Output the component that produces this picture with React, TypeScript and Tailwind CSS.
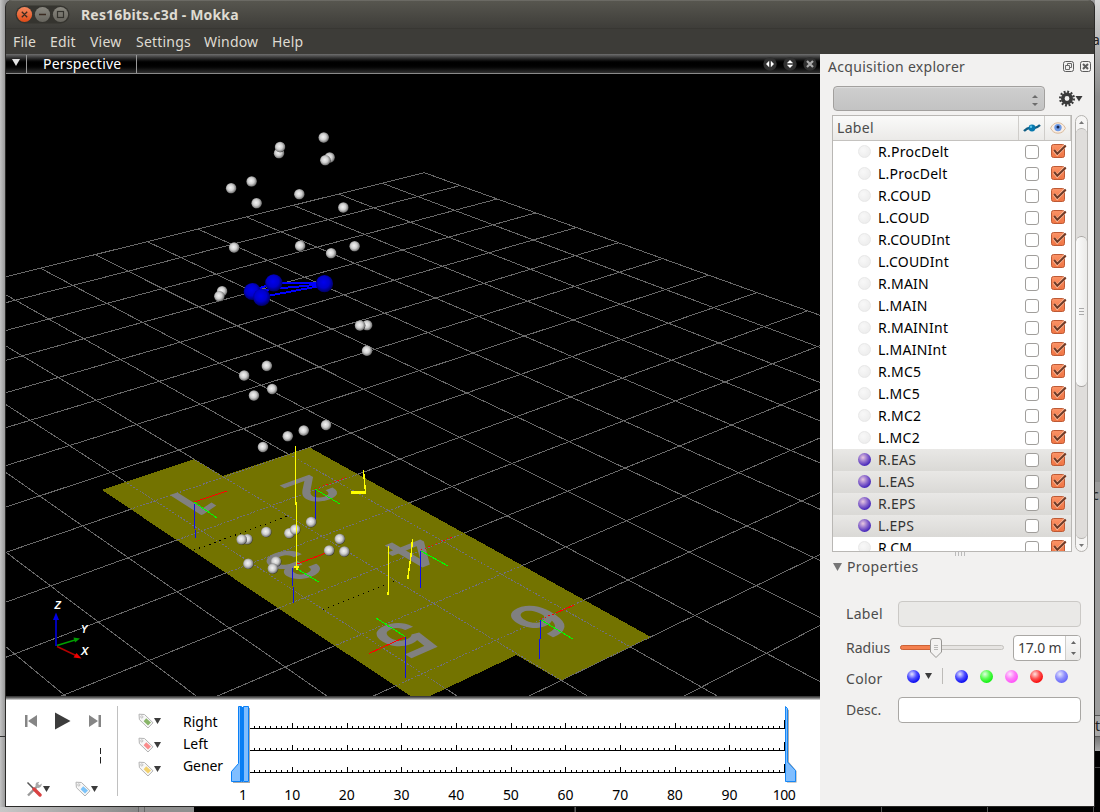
import React from "react";

type Pt = [number, number];

/* Ground plane projection */
const G = { x0: 424.3, y0: 172.7, a: -48.68, b: 7.35, c: 26.54, d: 9.17, g: -0.01711, h: -0.01988 };
const project = (u: number, v: number): Pt => {
  const w = 1 + G.g * u + G.h * v;
  return [(G.x0 + G.a * u + G.c * v) / w, (G.y0 + G.b * u + G.d * v) / w];
};
const groundMatrix = (x: number, y: number, k: number) => {
  const A = G.a - G.g * x;
  const B = G.c - G.h * x;
  const C = G.b - G.g * y;
  const D = G.d - G.h * y;
  const det = A * D - B * C;
  const u = ((x - G.x0) * D - B * (y - G.y0)) / det;
  const v = (A * (y - G.y0) - C * (x - G.x0)) / det;
  const w = (1 + G.g * u + G.h * v) / k;
  return `matrix(${A / w} ${C / w} ${-B / w} ${-D / w} ${x} ${y})`;
};

const steps = Array.from({ length: 21 }, (_, i) => i);
const gridPath = steps
  .flatMap((i) => [
    [project(i, 0), project(i, 20)],
    [project(0, i), project(20, i)],
  ])
  .map(([p, q]) => `M${p[0].toFixed(1)} ${p[1].toFixed(1)}L${q[0].toFixed(1)} ${q[1].toFixed(1)}`)
  .join("");

const plates = "102,490 194,459 223,476 309,447 651,637 560.5,680.5 516.5,655 428,697 412,697 281,610";

const markers: Pt[] = [
  [278.7, 153], [279.7, 146.7], [323.4, 137.3], [329.3, 157.3], [325, 160], [230.8, 188], [251.3, 181.2], [256.3, 203],
  [299, 194], [343, 207.3], [233.8, 247.3], [299.8, 245.6], [354.3, 246], [330.8, 253], [221.7, 291], [219, 296],
  [366.8, 325], [359.7, 325.3], [366.7, 350.5], [266.5, 365.6], [243.8, 375.3], [271.8, 388.8], [253.6, 395.3],
  [325.7, 424.8], [303.4, 430.3], [287.4, 436], [262.6, 446.8], [310.8, 521.8], [289, 533], [294.8, 529.3],
  [265.9, 531.7], [247, 539], [241.3, 539.2], [248, 563.5], [275.7, 561.3], [272.5, 568.3], [328.8, 550.2],
  [339.4, 538.8], [344, 551.3],
];
const pelvis: Pt[] = [[252.3, 291.5], [273.8, 282.8], [324.5, 283.7], [261.7, 297.3]];

const digits: [string, number, number][] = [
  ["1", 191, 503], ["2", 311.5, 489.5], ["3", 292.5, 565], ["4", 414, 552], ["5", 406.5, 638.5], ["6", 540, 620.5],
];

function Scene() {
  return (
    <svg className="block h-[622px] w-[814px] bg-black" viewBox="6 74 814 622">
      <defs>
        <radialGradient id="ball" cx="44%" cy="44%" r="58%">
          <stop offset="0" stopColor="#f4f4f4" />
          <stop offset="0.5" stopColor="#cfcfcf" />
          <stop offset="0.85" stopColor="#808080" />
          <stop offset="1" stopColor="#2c2c2c" />
        </radialGradient>
        <radialGradient id="blueBall" cx="45%" cy="42%" r="60%">
          <stop offset="0" stopColor="#0000ee" />
          <stop offset="0.55" stopColor="#0000cc" />
          <stop offset="1" stopColor="#000058" />
        </radialGradient>
        <clipPath id="plateClip">
          <polygon points={plates} />
        </clipPath>
      </defs>
      <g shapeRendering="crispEdges" fill="none">
        <path d={gridPath} stroke="#686868" strokeWidth="1" />
        <polygon points={plates} fill="#737300" />
        <path d={gridPath} stroke="#70707c" strokeDasharray="2 1.5" clipPath="url(#plateClip)" />
        <path d="M194 550L288 516M323 610L394 581" stroke="#000" strokeDasharray="1.2 4.2" />
      </g>
      {digits.map(([t, x, y]) => (
        <text
          key={t}
          transform={groundMatrix(x, y, 0.0091)}
          y="35"
          textAnchor="middle"
          fontSize="100"
          fill="#808080"
          stroke="#808080"
          strokeWidth="3"
          fontFamily="Roboto, sans-serif"
        >
          {t}
        </text>
      ))}
      <g shapeRendering="crispEdges" fill="none" strokeWidth="1">
        <path stroke="#0f0fe8" d="M194 504L194.5 520L195.5 538M315.5 490V524M292.5 568L293.5 603M420.5 551V588M405.5 637V678M540.5 620L539.5 659" />
        <path stroke="#00ff00" d="M194 502L217 518M315 489L340 504M297 569L319 582M421 551L448 566M405 636.5L376 618M541 620L573 639" />
        <path stroke="#ff0000" d="M194 502L227 491M297 564L326 553M405 637L369 653.5M556 613L574 605" />
        <path stroke="#ff0000" strokeDasharray="1.5 2.5" d="M315 489L349 476.5M421 550L452 537M541 619L556 613" />
      </g>
      {markers.map(([x, y], i) => (
        <circle key={i} cx={x + 0.4} cy={y + 0.3} r="5.3" fill="url(#ball)" />
      ))}
      <g shapeRendering="crispEdges" fill="none" stroke="#ffff00">
        <path d="M295.5 446V505" />
        <path d="M296.5 502V567M388.5 546V594M412.5 539L411 556L408 577M363.5 470L364.5 482L365.5 492M294 567H299M296 569H298" strokeWidth="1.4" />
        <path d="M351 492.3H366M387 593.5H389M407 577.5H409" strokeWidth="2.4" />
      </g>
      <path d="M252 291L274 283L325 282.5M252 291L325 284M262 297L325 285M262 297L274 283M252 291L262 297" stroke="#0000ff" strokeWidth="2" fill="none" shapeRendering="crispEdges" />
      {pelvis.map(([x, y], i) => (
        <circle key={i} cx={x} cy={y} r="8.6" fill="url(#blueBall)" />
      ))}
      <path d="M56 646V617" stroke="#0000b4" strokeWidth="2" />
      <path d="M56 612.5L59 620H53Z" fill="#0000e6" />
      <path d="M57 645.5L75 640" stroke="#00a000" strokeWidth="1.4" />
      <path d="M80 638.5L73.5 637.5L75 642.5Z" fill="#009c00" />
      <path d="M57 646.5L76 655.5" stroke="#b40000" strokeWidth="1.4" />
      <path d="M81.5 658.5L73.5 657.5L76.5 653Z" fill="#f00000" />
      <g fill="#fff" fontFamily="Liberation Sans, sans-serif" fontStyle="italic" fontWeight="bold" fontSize="11">
        <text x="54.5" y="609" textLength="6.5" lengthAdjust="spacingAndGlyphs">Z</text>
        <text x="81" y="633" textLength="6.5" lengthAdjust="spacingAndGlyphs">Y</text>
        <text x="81" y="655" textLength="7.5" lengthAdjust="spacingAndGlyphs">X</text>
      </g>
    </svg>
  );
}

function TitleButtons() {
  return (
    <svg className="ml-[9px] h-5 w-[56px]" viewBox="15 5 56 20">
      <defs>
        <linearGradient id="closeFill" x2="0" y2="1">
          <stop offset="0" stopColor="#f58a60" />
          <stop offset="1" stopColor="#df4a16" />
        </linearGradient>
        <linearGradient id="btnFill" x2="0" y2="1">
          <stop offset="0" stopColor="#8a8880" />
          <stop offset="1" stopColor="#66645d" />
        </linearGradient>
      </defs>
      <rect x="15.5" y="5.5" width="54" height="18" rx="9" fill="#35342f" />
      <circle cx="24.5" cy="14.5" r="7.6" fill="url(#closeFill)" />
      <circle cx="42.5" cy="14.5" r="7.6" fill="url(#btnFill)" />
      <circle cx="60.5" cy="14.5" r="7.6" fill="url(#btnFill)" />
      <path d="M21.8 11.8L27.2 17.2M27.2 11.8L21.8 17.2M39 14.5H46" stroke="#3a2a20" strokeWidth="1.3" />
      <rect x="57.5" y="11.5" width="6" height="6" fill="none" stroke="#34332e" strokeWidth="1.2" />
    </svg>
  );
}

const ball = "size-[13px] rounded-full";
const names = [
  "R.ProcDelt", "L.ProcDelt", "R.COUD", "L.COUD", "R.COUDInt", "L.COUDInt", "R.MAIN", "L.MAIN", "R.MAINInt", "L.MAINInt",
  "R.MC5", "L.MC5", "R.MC2", "L.MC2", "R.EAS", "L.EAS", "R.EPS", "L.EPS", "R.CM",
];

function Checked() {
  return (
    <svg className="h-[17px] w-[17px]" viewBox="0 0 17 17">
      <defs>
        <linearGradient id="chk" x2="0" y2="1">
          <stop offset="0" stopColor="#fb9367" />
          <stop offset="1" stopColor="#ef7443" />
        </linearGradient>
      </defs>
      <rect x="1.5" y="1.5" width="13" height="13" rx="2" fill="url(#chk)" stroke="#bd5a35" />
      <path d="M4.2 7.4L7.3 11L15 2.8" fill="none" stroke="#ffc0a0" strokeWidth="3.2" />
      <path d="M4.2 7L7.3 10.8L15.8 2.5" fill="none" stroke="#6e3b28" strokeWidth="2" />
    </svg>
  );
}

function Row({ name }: { name: string }) {
  const on = /\.E[AP]S$/.test(name);
  return (
    <div className={"flex h-[22px] shrink-0 items-center " + (on ? "bg-linear-to-b from-[#e9e8e6] to-[#dad9d6] text-[#333]" : "text-black")}>
      <div
        className={
          "mb-[1px] ml-[25px] size-[13px] shrink-0 rounded-full " +
          (on
            ? "bg-[radial-gradient(circle_at_38%_35%,#e8c8e0,#8a68cc_40%,#3f20b8_75%,#3418a0)]"
            : "border border-[#e8e8e8] bg-[radial-gradient(circle_at_38%_35%,#f8f8f8,#eaeaea)]")
        }
      />
      <span className="ml-[7px] w-[147px] shrink-0 tracking-[0.25px]">{name}</span>
      <div className="mb-[1px] h-[14px] w-[14px] shrink-0 rounded-[3px] border border-[#a09e9b] bg-white" />
      <div className="mb-[1px] ml-[11px] h-[17px] shrink-0"><Checked /></div>
    </div>
  );
}

function Down({ className = "" }: { className?: string }) {
  return (
    <svg className={"h-[6px] w-[7px] " + className} viewBox="0 0 7 6">
      <path d="M0 0H7L3.5 6Z" fill="#3c3c3c" />
    </svg>
  );
}

function Tag({ color }: { color: string }) {
  return (
    <div className="flex items-center">
      <svg className="h-4 w-4" viewBox="0 0 16 16">
        <path d="M1 1.2L6.5 1.5L15 9.8L10 15L1.4 6.6Z" fill="#f7f7f7" stroke="#b4b4b4" strokeWidth="1" strokeLinejoin="round" />
        <circle cx="3.8" cy="3.9" r="1.1" fill="#fff" stroke="#aaa" strokeWidth=".7" />
        <path d="M8.2 5.2L13 9.6L10 12.6L5.6 8.2Z" fill={color} />
      </svg>
      <Down />
    </div>
  );
}

function Explorer() {
  return (
    <div className="flex w-[256px] gap-[3px]">
      <div className="h-[437px] w-[240px] shrink-0 overflow-hidden border border-[#b9b7b4] bg-white">
        <div className="flex h-[25px] border-b border-[#c4c2bf] bg-linear-to-b from-[#fafaf9] to-[#ebeae8] text-[#4c4c4c]">
          <div className="flex w-[186px] items-center border-r border-[#cfcdca] pl-1 tracking-[0.3px]">Label</div>
          <div className="flex w-[26px] items-center justify-center border-r border-[#cfcdca]">
            <svg className="h-3 w-[18px]" viewBox="0 0 18 12">
              <path d="M1 9Q5 5 9 6T17 3" fill="none" stroke="#115e84" strokeWidth="2.4" />
              <circle cx="9" cy="6" r="3.4" fill="#0878ad" />
              <circle cx="8" cy="4.8" r="1.2" fill="#57c3ec" />
            </svg>
          </div>
          <div className="flex flex-1 items-center justify-center border-r border-[#cfcdca]">
            <svg className="h-3 w-4" viewBox="0 0 16 12">
              <path d="M.6 6.2Q3 .8 8 .8T15.4 6.2Q13 11.2 8 11.2T.6 6.2Z" fill="#f8eee6" stroke="#d8b898" />
              <circle cx="8" cy="5.6" r="3.7" fill="#6f9be6" />
              <circle cx="8" cy="5" r="1.5" fill="#16264e" />
            </svg>
          </div>
        </div>
        <div className="flex h-[410px] flex-col overflow-hidden">
          {names.map((n) => <Row key={n} name={n} />)}
        </div>
      </div>
      <div className="flex h-[437px] w-[13px] flex-col overflow-hidden rounded-full border border-[#b4b2af] bg-[#f6f5f4]">
        <div className="flex h-[12px] items-center justify-center"><svg className="h-[3px] w-[5px]" viewBox="0 0 5 3"><path d="M0 3H5L2.5 0Z" fill="#777" /></svg></div>
        <div className="flex h-[411px] flex-col rounded-full border-y border-[#b4b2af] bg-[#dfdddb]">
          <div className="mt-[107px] flex h-[151px] flex-col items-center justify-center gap-[2px] rounded-full border-y border-[#a7a5a2] bg-linear-to-r from-[#fbfbfb] to-[#ebeae8]">
            <i className="h-px w-[5px] bg-[#aaa]" /><i className="h-px w-[5px] bg-[#aaa]" /><i className="h-px w-[5px] bg-[#aaa]" />
          </div>
        </div>
        <div className="flex h-[12px] items-center justify-center"><svg className="h-[3px] w-[5px]" viewBox="0 0 5 3"><path d="M0 0H5L2.5 3Z" fill="#777" /></svg></div>
      </div>
    </div>
  );
}

function Properties() {
  return (
    <div className="flex flex-col pl-[26px] text-[#4c4c4c]">
      <div className="mt-[23px] flex h-[26px] items-center">
        <span className="w-[52px] tracking-[0.3px]">Label</span>
        <div className="h-[26px] w-[183px] rounded-[4px] border border-[#cbc9c6] bg-[#eae9e7]" />
      </div>
      <div className="mt-2 flex h-[26px] items-center">
        <span className="w-[54px]">Radius</span>
        <svg className="h-6 w-[105px]" viewBox="0 0 105 24">
          <rect x=".5" y="9.5" width="103" height="4" rx="2" fill="#e6e4e2" stroke="#c4c2be" />
          <rect x=".5" y="9.5" width="34" height="4" rx="2" fill="#f4804f" stroke="#cc6236" />
          <path d="M30.5 5Q30.5 2.5 33 2.5H39Q41.5 2.5 41.5 5V16L36 21.5L30.5 16Z" fill="#f3f2f1" stroke="#989693" />
          <path d="M34 9.5H38M34 11.5H38M34 13.5H38" stroke="#aaa" strokeWidth=".8" />
        </svg>
        <div className="ml-2 flex h-[26px] w-[68px] overflow-hidden rounded-[4px] border border-[#a9a7a4] bg-white">
          <span className="w-[51px] overflow-hidden pl-1 leading-[24px] tracking-[-0.2px] whitespace-nowrap text-[#3c3c3c]">17.0 m</span>
          <div className="flex flex-1 flex-col items-center justify-center gap-2 border-l border-[#cfcdca] bg-linear-to-b from-[#fafafa] to-[#eae9e7]">
            <svg className="h-[3px] w-[5px]" viewBox="0 0 5 3"><path d="M0 3H5L2.5 0Z" fill="#666" /></svg>
            <svg className="h-[3px] w-[5px]" viewBox="0 0 5 3"><path d="M0 0H5L2.5 3Z" fill="#666" /></svg>
          </div>
        </div>
      </div>
      <div className="mt-[5px] flex h-[22px] items-center">
        <span className="w-[61px] pt-[4px] tracking-[0.3px]">Color</span>
        <div className={ball + " mb-[2px] bg-[radial-gradient(circle_at_38%_32%,#e4e4ff,#4c4cff_40%,#0808ee_75%,#9090b8)]"} />
        <Down className="mb-[2px] ml-[5px]" />
        <div className="mb-[2px] ml-[10px] h-4 w-px bg-[#bdbbb8]" />
        <div className="mb-[2px] ml-[12px] flex gap-3">
          <div className={ball + " bg-[radial-gradient(circle_at_38%_32%,#e4e4ff,#4c4cff_40%,#0808ee_75%,#9090b8)]"} />
          <div className={ball + " bg-[radial-gradient(circle_at_38%_32%,#e0ffe0,#58fc50_40%,#10f010_75%,#90b890)]"} />
          <div className={ball + " bg-[radial-gradient(circle_at_38%_32%,#ffe4ff,#fd80f8_40%,#ff50f8_75%,#c0a0c0)]"} />
          <div className={ball + " bg-[radial-gradient(circle_at_38%_32%,#ffe4e0,#fd5050_40%,#f80808_75%,#b89090)]"} />
          <div className={ball + " bg-[radial-gradient(circle_at_38%_32%,#e8e8ff,#9090fc_40%,#6464f8_75%,#a0a0b8)]"} />
        </div>
      </div>
      <div className="mt-[9px] flex h-[26px] items-center">
        <span className="w-[52px]">Desc.</span>
        <div className="h-[26px] w-[183px] rounded-[4px] border border-[#a9a7a4] bg-white" />
      </div>
    </div>
  );
}

function SidePanel() {
  return (
    <div className="flex w-[274px] flex-col bg-[#f2f1f0]">
      <div className="flex h-[26px] items-center pr-[3px] pl-2 text-[#4c4c4c]">
        <span className="flex-1 tracking-[0.3px] whitespace-nowrap">Acquisition explorer</span>
        <svg className="mb-px h-[11px] w-[28px]" viewBox="0 0 28 11">
          <g fill="none" stroke="#5c5c5c">
            <rect x=".5" y=".5" width="10" height="10" rx="2" />
            <path d="M4.5 4V2.5H8.5V6.5H7M2.5 4.5H6.5V8.5H2.5Z" strokeWidth=".9" />
            <rect x="17.5" y=".5" width="10" height="10" rx="2" />
            <path d="M20 3L25 8M25 3L20 8" strokeWidth="2" />
          </g>
        </svg>
      </div>
      <div className="mt-[6px] flex items-center pl-[13px]">
        <div className="flex h-[25px] w-[212px] flex-col items-end justify-center gap-[5px] rounded-[4px] border border-[#a2a09e] bg-linear-to-b from-[#cecece] to-[#c3c3c3] pr-[6px] shadow-[inset_0_1px_1px_#dedede]">
          <svg className="mt-[3px] h-[3px] w-[6px]" viewBox="0 0 6 3"><path d="M0 3H6L3 0Z" fill="#6c6c6c" /></svg>
          <svg className="h-[3px] w-[6px]" viewBox="0 0 6 3"><path d="M0 0H6L3 3Z" fill="#6c6c6c" /></svg>
        </div>
        <svg className="ml-[13px] h-[17px] w-[25px]" viewBox="0 0 25 17">
          <circle cx="9" cy="8.5" r="4.2" fill="none" stroke="#3a3a3a" strokeWidth="3.6" />
          <circle cx="9" cy="8.5" r="6.8" fill="none" stroke="#3a3a3a" strokeWidth="2.4" strokeDasharray="1.9 1.66" />
          <path d="M17.5 6H24.5L21 11.5Z" fill="#3a3a3a" />
        </svg>
      </div>
      <div className="mt-1 pl-3"><Explorer /></div>
      <div className="flex h-[4px] items-center justify-center gap-[2px] pl-[5px]">
        <i className="h-1 w-px bg-[#bbb]" /><i className="h-1 w-px bg-[#bbb]" /><i className="h-1 w-px bg-[#bbb]" /><i className="h-1 w-px bg-[#bbb]" />
      </div>
      <div className="flex h-[22px] items-center pl-[13px] text-[#4c4c4c]">
        <svg className="h-[8px] w-[9px]" viewBox="0 0 9 8"><path d="M0 0H9L4.5 8Z" fill="#767676" /></svg>
        <span className="ml-[5px] tracking-[0.35px]">Properties</span>
      </div>
      <Properties />
    </div>
  );
}

const tickX = (n: number) => 292.5 + (n - 10) * 5.467;
const frames = Array.from({ length: 98 }, (_, i) => i + 2);
const tracks = [728.5, 750.5, 772.5];

function Timeline() {
  return (
    <div className="flex h-[106px] bg-white text-black">
      <div className="flex w-[111px] flex-col">
        <svg className="mt-3 ml-[18px] h-[18px] w-20" viewBox="24 712 80 18">
          <path d="M25 715H27.5V727H25ZM37 715V727L28 721Z" fill="#858585" />
          <path d="M55 712.5V729.5L70.5 721Z" fill="#3c3c3c" />
          <path d="M89 715V727L98 721ZM98.5 715H101V727H98.5Z" fill="#858585" />
        </svg>
        <svg className="mt-[18px] ml-[94px] h-4 w-px" viewBox="0 0 1 16"><path d="M.5 0V6M.5 9V15.5" stroke="#222" /></svg>
        <div className="mt-[17px] ml-5 flex items-center gap-[25px]">
          <div className="flex items-center">
            <svg className="h-4 w-[17px]" viewBox="0 0 17 16">
              <path d="M2 14.5L11 5.5" stroke="#9a9a9a" strokeWidth="2.4" />
              <path d="M10.5 1.5Q8.5 4 10.5 6T15 5.5L16 2.5L13.5 4L12 3L13.5 .8Z" fill="#a8a8a8" />
              <path d="M1.5 1.5L8 8" stroke="#555" strokeWidth="1.5" />
              <path d="M8 8L14 14" stroke="#d84242" strokeWidth="3.4" strokeLinecap="round" />
            </svg>
            <Down />
          </div>
          <Tag color="#7cc4fa" />
        </div>
      </div>
      <div className="mt-[6px] h-[90px] w-px bg-[#c0c0c0]" />
      <div className="mt-[13px] ml-5 flex w-[32px] flex-col gap-2"><Tag color="#88b468" /><Tag color="#fa8c8c" /><Tag color="#f2d16c" /></div>
      <div className="mt-[11px] ml-[13px] flex w-[44px] flex-col leading-[22px]">
        <span>Right</span><span>Left</span><span className="tracking-[-0.1px]">Gener</span>
      </div>
      <svg className="h-[106px] w-[590px]" viewBox="227 700 590 106">
        <g shapeRendering="crispEdges" stroke="#000">
          {tracks.map((y) => (
            <g key={y}>
              <path d={`M243 ${y}H785M784.5 ${y}v-9`} />
              {frames.map((n) => (
                <path key={n} d={`M${Math.floor(tickX(n)) + 0.5} ${y}v${n % 10 === 0 ? -6 : -3}`} />
              ))}
            </g>
          ))}
        </g>
        <path d="M249 708H250V783H233V782H249Z" fill="#aaa" />
        <path d="M238.5 706.5H241.5V781.5H231.5V771.5L238.5 763.5Z" fill="#80beff" stroke="#0a80f6" />
        <path d="M243.5 706.5H248.5V781.5H243.5Z" fill="#80beff" stroke="#0a80f6" />
        <path d="M240.5 707V782M242.5 707V782" stroke="#0a7df0" />
        <path d="M787 709L788.8 710V762L796.5 771V782.5H787Z" fill="#999" />
        <path d="M785.5 706.5L787.5 708.5V762L795.5 770.5V781.5H785.5Z" fill="#80beff" stroke="#1687f5" />
        <g fontFamily="Noto Sans, sans-serif" fontSize="14" textAnchor="middle">
          {[1, 10, 20, 30, 40, 50, 60, 70, 80, 90, 100].map((n) => (
            <text key={n} x={tickX(n) - 0.3} y="800" textLength={n === 1 ? undefined : n === 100 ? 23 : 16}>{n}</text>
          ))}
        </g>
      </svg>
    </div>
  );
}

export default function App() {
  return (
    <div className="relative flex h-[812px] w-[1100px] flex-col overflow-hidden bg-[#999] font-['Noto_Sans',sans-serif] text-[14px] leading-[20px]">
      <div className="flex h-[807px]">
        <div className="flex w-[5px] flex-col bg-linear-to-r from-[#c4c4c4] to-[#9a9a9a]">
          <div className="h-[737px] border-b border-[#333]" />
        </div>
        <div className="flex w-[1090px] flex-col overflow-hidden rounded-t-[7px] border-r border-b border-l border-[#2b2a28] bg-[#3c3b37]">
          <div className="flex h-7 items-center border-t border-[#6b6a64] bg-linear-to-b from-[#57564f] to-[#3e3d39]">
            <TitleButtons />
            <span className="ml-[10px] font-bold tracking-[0.17px] text-[#dfdbd2]">Res16bits.c3d - Mokka</span>
          </div>
          <div className="flex h-[26px] items-center border-t border-[#383733] bg-[#3d3c38] pl-[7px] tracking-[0.2px] text-[#dfdbd2]">
            <span className="w-[37px]">File</span>
            <span className="w-10">Edit</span>
            <span className="w-[46px]">View</span>
            <span className="w-[68px]">Settings</span>
            <span className="w-[68px]">Window</span>
            <span>Help</span>
          </div>
          <div className="flex h-[752px]">
            <div className="flex w-[814px] flex-col">
              <div className="flex h-5 items-center border-b border-[#8a8a8a] bg-linear-to-b from-[#707070] via-black via-50% to-[#303030] text-white">
                <svg className="mb-[3px] ml-[6px] h-[7px] w-2" viewBox="0 0 8 7"><path d="M0 0H8L4 7Z" fill="#e4e4e4" /></svg>
                <div className="ml-[6px] h-[18px] w-px bg-[#999]" />
                <span className="ml-4 w-[93px] tracking-[0.25px]">Perspective</span>
                <div className="h-[18px] w-px bg-[#999]" />
                <svg className="mr-[2px] ml-auto h-4 w-[56px]" viewBox="762 56 56 16">
                  <circle cx="770" cy="64" r="6.7" fill="#303030" />
                  <circle cx="790" cy="64" r="6.7" fill="#303030" />
                  <circle cx="810" cy="64" r="6.7" fill="#303030" />
                  <path d="M766 64L769.2 60.8V67.2ZM774 64L770.8 60.8V67.2ZM790 60L793.2 63.2H786.8ZM790 68L793.2 64.8H786.8Z" fill="#fff" />
                  <path d="M807 61L813 67M813 61L807 67" stroke="#aaa" strokeWidth="2.2" />
                </svg>
              </div>
              <Scene />
              <div className="h-1 bg-linear-to-b from-[#2c2c2c] via-[#707070] to-[#e8e8e8]" />
              <Timeline />
            </div>
            <SidePanel />
          </div>
        </div>
        <div className="flex w-[5px] flex-col overflow-hidden text-[#222]">
          <div className="h-[482px] bg-linear-to-b from-[#d8d8d8] to-[#8c8c8c] to-20% pt-[30px] -indent-[3px]">a</div>
          <div className="h-[233px] bg-[#9b9b9b] pt-[3px] -indent-[3px]">c</div>
          <div className="h-[22px] border-y border-[#555] bg-[#a8a8a8]">t</div>
          <div className="h-[14px] bg-linear-to-b from-[#777] to-[#aaa]" />
          <div className="flex-1 bg-black"><div className="mt-4 h-px bg-[#444]" /></div>
        </div>
      </div>
      <div className="flex h-[5px] bg-[#8f8f8f]">
        <div className="w-[138px] bg-linear-to-r from-[#c8c8c8] to-[#888]" />
        <div className="w-[7px] border-x border-[#666]" />
        <div className="w-[50px] border-r border-black" />
        <div className="flex flex-1 bg-black">
          <div className="w-[380px] border-r border-[#333]" />
          <div className="w-[307px] border-x border-[#555]" />
          <div className="w-[106px] border-r border-[#555]" />
          <div className="w-[106px] border-r border-[#555]" />
        </div>
      </div>
    </div>
  );
}
